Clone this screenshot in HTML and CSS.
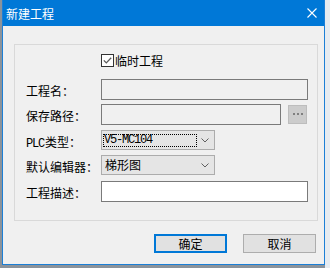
FILE: index.html
```html
<!DOCTYPE html>
<html>
<head>
  <meta charset="utf-8">
  <title>新建工程</title>
  <link rel="stylesheet" href="styles.css">
</head>
<body>
  <div class="window">
    <div class="titlebar">
      <span class="title">新建工程</span>
      <svg class="close" width="10" height="10" viewBox="0 0 10 10">
        <path d="M0.5 0.5L9.5 9.5M9.5 0.5L0.5 9.5" stroke="#fff" stroke-width="1.1" fill="none"/>
      </svg>
    </div>

    <div class="client">
      <div class="group">
        <label class="check-row">
          <svg class="checkbox" width="13" height="13" viewBox="0 0 13 13">
            <rect x="0.5" y="0.5" width="12" height="12" fill="#fff" stroke="#333"/>
            <path d="M2.8 6.4L5.3 8.9L10.2 3.8" stroke="#5a5a5a" stroke-width="1.3" fill="none"/>
          </svg>
          <span>临时工程</span>
        </label>

        <div class="rows">
          <div class="row">
            <span class="label">工程名：</span>
            <input type="text" class="text text-ro text-wide" readonly>
          </div>
          <div class="row">
            <span class="label">保存路径：</span>
            <input type="text" class="text text-ro text-path" readonly>
            <div class="browse">
              <svg width="17" height="17" viewBox="0 0 17 17">
                <rect x="4" y="7" width="2" height="2" fill="#7f7f7f"/>
                <rect x="8" y="7" width="2" height="2" fill="#7f7f7f"/>
                <rect x="12" y="7" width="2" height="2" fill="#7f7f7f"/>
              </svg>
            </div>
          </div>
          <div class="row row-gap">
            <span class="label"><span class="mono">PLC</span>类型：</span>
            <div class="select">
              <span class="value value-focus">V5-MC104</span>
              <svg class="chevron" width="8" height="5" viewBox="0 0 8 5">
                <path d="M0.5 0.5L4 4L7.5 0.5" stroke="#606060" fill="none"/>
              </svg>
            </div>
          </div>
          <div class="row">
            <span class="label">默认编辑器：</span>
            <div class="select">
              <span class="value">梯形图</span>
              <svg class="chevron" width="8" height="5" viewBox="0 0 8 5">
                <path d="M0.5 0.5L4 4L7.5 0.5" stroke="#606060" fill="none"/>
              </svg>
            </div>
          </div>
          <div class="row row-gap">
            <span class="label">工程描述：</span>
            <input type="text" class="text text-wide">
          </div>
        </div>
      </div>

      <div class="buttons">
        <button class="btn btn-default">确定</button>
        <button class="btn">取消</button>
      </div>
    </div>
  </div>
</body>
</html>
```

FILE: styles.css
```css
html, body {
  margin: 0;
  height: 100%;
}

body {
  padding-left: 2px;
  background: linear-gradient(to right, #8b939b 0, #8b939b 325px, #e6ebf0 325px);
  font-family: "Noto Sans CJK SC", "Noto Sans", sans-serif;
  font-size: 12px;
  color: #000;
}

.window {
  width: 323px;
  height: 265px;
  box-sizing: border-box;
  border: 1px solid #1c7fd6;
  border-top: none;
  background-color: #f0f0f0;
}

.titlebar {
  height: 26px;
  background-color: #0078d7;
  display: flex;
  align-items: center;
  justify-content: space-between;
  padding: 0 7px 0 3px;
}

.title {
  color: #fff;
  font-size: 12px;
}

.close {
  display: block;
}

.client {
  padding: 18px 0 0 11px;
}

.group {
  width: 304px;
  height: 177px;
  box-sizing: border-box;
  border: 1px solid #d9d9d9;
  padding: 9px 0 0 11px;
}

.check-row {
  display: flex;
  align-items: center;
  height: 13px;
  margin-left: 75px;
  gap: 1px;
}

.checkbox {
  display: block;
}

.rows {
  margin-top: 12px;
  display: flex;
  flex-direction: column;
  gap: 4px;
}

.row {
  display: flex;
  align-items: flex-start;
  height: 21px;
}

.row-gap {
  margin-top: 1px;
}

.label {
  width: 75px;
  line-height: 21px;
  padding-top: 1px;
  white-space: nowrap;
}

.mono {
  font-family: "Liberation Mono", monospace;
  font-size: 12px;
  letter-spacing: -1.2px;
  margin-right: 1px;
}

.text {
  height: 21px;
  box-sizing: border-box;
  border: 1px solid #7a7a7a;
  background-color: #fff;
  margin: 0;
  padding: 0 2px;
  font: inherit;
  outline: none;
}

.text-ro {
  background-color: #f0f0f0;
}

.text-wide {
  width: 207px;
}

.text-path {
  width: 180px;
}

.browse {
  width: 19px;
  height: 19px;
  box-sizing: border-box;
  margin: 1px 0 0 7px;
  border: 1px solid #bdbdbd;
  background-color: #cccccc;
}

.browse svg {
  display: block;
}

.select {
  width: 114px;
  height: 20px;
  box-sizing: border-box;
  border: 1px solid #acacac;
  background-color: #e5e5e5;
  display: flex;
  align-items: center;
  justify-content: space-between;
  padding: 0 5px 0 1px;
}

.value {
  padding-left: 2px;
  line-height: 18px;
}

.value-focus {
  width: 94px;
  height: 13px;
  box-sizing: border-box;
  border: 1px dotted #000;
  padding-left: 0;
  line-height: 11px;
  font-family: "Liberation Mono", monospace;
  font-size: 12px;
  letter-spacing: -1.2px;
}

.chevron {
  display: block;
}

.buttons {
  display: flex;
  justify-content: flex-end;
  gap: 16px;
  margin-top: 13px;
  padding-right: 8px;
}

.btn {
  width: 73px;
  height: 19px;
  box-sizing: border-box;
  border: 1px solid #adadad;
  background-color: #e1e1e1;
  font: inherit;
  color: #000;
  padding: 0;
  line-height: 15px;
}

.btn-default {
  border: 2px solid #0078d7;
}
```
